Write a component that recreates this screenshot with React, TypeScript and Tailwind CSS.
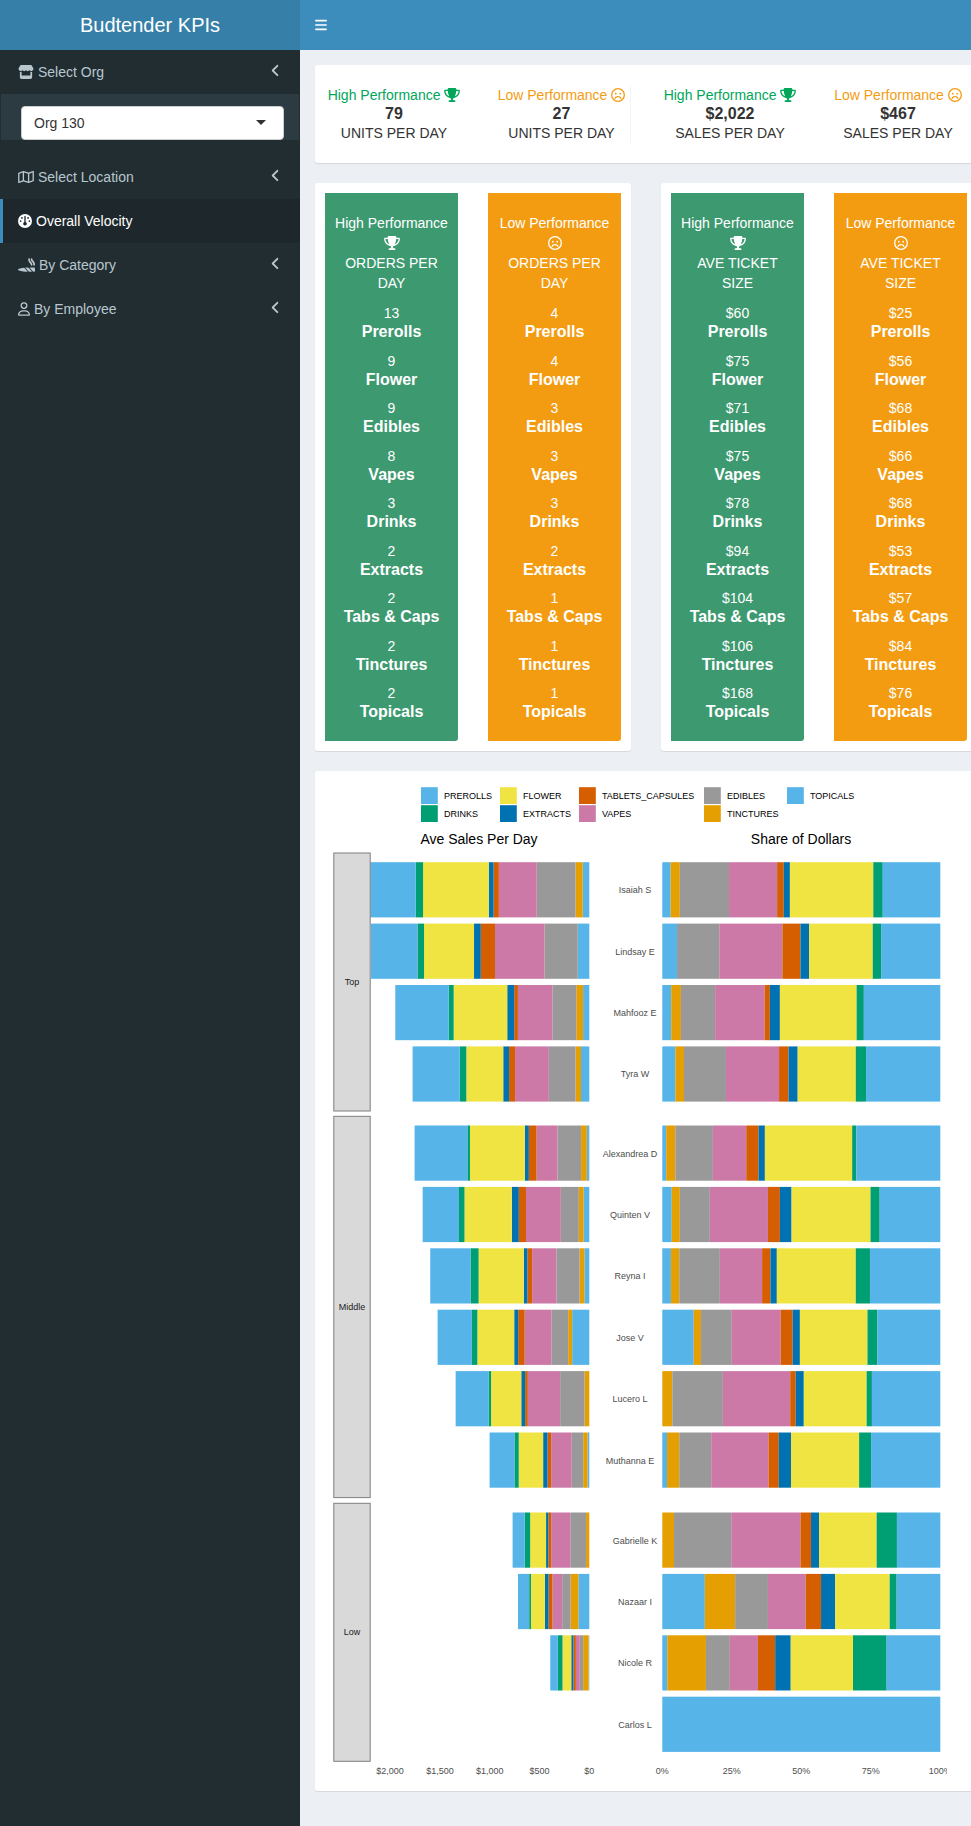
import type { ReactNode } from "react";
import {
  FaAngleLeft,
  FaBars,
  FaGauge,
  FaJoint,
  FaRegFaceFrown,
  FaRegMap,
  FaRegUser,
  FaStore,
  FaTrophy,
} from "react-icons/fa6";

type Level = "high" | "low";

const CATEGORIES = [
  "Prerolls",
  "Flower",
  "Edibles",
  "Vapes",
  "Drinks",
  "Extracts",
  "Tabs & Caps",
  "Tinctures",
  "Topicals",
];

const SUMMARY: { level: Level; value: string; label: string; divider?: boolean }[] = [
  { level: "high", value: "79", label: "UNITS PER DAY" },
  { level: "low", value: "27", label: "UNITS PER DAY", divider: true },
  { level: "high", value: "$2,022", label: "SALES PER DAY" },
  { level: "low", value: "$467", label: "SALES PER DAY" },
];

const ORDERS_HIGH = ["13", "9", "9", "8", "3", "2", "2", "2", "2"];
const ORDERS_LOW = ["4", "4", "3", "3", "3", "2", "1", "1", "1"];
const TICKET_HIGH = ["$60", "$75", "$71", "$75", "$78", "$94", "$104", "$106", "$168"];
const TICKET_LOW = ["$25", "$56", "$68", "$66", "$68", "$53", "$57", "$84", "$76"];

// Stack order of the share bars, left to right.
const STACK = [
  { key: "topicals", color: "#56b4e9" },
  { key: "tinctures", color: "#e69f00" },
  { key: "edibles", color: "#999999" },
  { key: "vapes", color: "#cc79a7" },
  { key: "tablets", color: "#d55e00" },
  { key: "extracts", color: "#0072b2" },
  { key: "flower", color: "#f0e442" },
  { key: "drinks", color: "#009e73" },
  { key: "prerolls", color: "#56b4e9" },
];

const LEGEND = [
  { x: 96, row: 0, label: "PREROLLS", color: "#56b4e9" },
  { x: 96, row: 1, label: "DRINKS", color: "#009e73" },
  { x: 175, row: 0, label: "FLOWER", color: "#f0e442" },
  { x: 175, row: 1, label: "EXTRACTS", color: "#0072b2" },
  { x: 254, row: 0, label: "TABLETS_CAPSULES", color: "#d55e00" },
  { x: 254, row: 1, label: "VAPES", color: "#cc79a7" },
  { x: 379, row: 0, label: "EDIBLES", color: "#999999" },
  { x: 379, row: 1, label: "TINCTURES", color: "#e69f00" },
  { x: 462, row: 0, label: "TOPICALS", color: "#56b4e9" },
];

// `cuts` holds the cumulative share (percent) at the end of each stack entry but the last.
type Person = { name: string; sales: number; cuts: number[] };
type Group = { name: string; top: number; height: number; nameX: number; people: Person[] };

const GROUPS: Group[] = [
  {
    name: "Top",
    top: 72,
    height: 258,
    nameX: 310,
    people: [
      { name: "Isaiah S", sales: 2199, cuts: [3.0, 6.3, 24.0, 41.3, 43.7, 45.9, 75.9, 79.3] },
      { name: "Lindsay E", sales: 2192, cuts: [5.3, 5.3, 20.5, 43.2, 49.7, 52.8, 75.7, 78.7] },
      { name: "Mahfooz E", sales: 1948, cuts: [3.2, 6.7, 19.0, 36.8, 38.7, 42.3, 69.9, 72.5] },
      { name: "Tyra W", sales: 1774, cuts: [4.7, 7.8, 22.9, 42.0, 45.4, 48.7, 69.6, 73.3] },
    ],
  },
  {
    name: "Middle",
    top: 335.3,
    height: 381.3,
    nameX: 305,
    people: [
      { name: "Alexandrea D", sales: 1754, cuts: [1.4, 4.7, 18.2, 30.2, 34.6, 36.9, 68.3, 69.8] },
      { name: "Quinten V", sales: 1673, cuts: [3.4, 6.3, 17.1, 38.0, 42.3, 46.5, 74.9, 78.2] },
      { name: "Reyna I", sales: 1597, cuts: [3.1, 6.1, 20.7, 35.9, 38.9, 41.2, 69.6, 74.7] },
      { name: "Jose V", sales: 1523, cuts: [11.3, 13.9, 25.0, 42.6, 46.9, 49.5, 73.8, 77.4] },
      { name: "Lucero L", sales: 1342, cuts: [0, 3.6, 21.8, 46.0, 48.0, 50.9, 73.5, 75.4] },
      { name: "Muthanna E", sales: 1001, cuts: [1.7, 6.1, 17.6, 38.2, 41.9, 46.3, 70.8, 75.1] },
    ],
  },
  {
    name: "Low",
    top: 722.3,
    height: 258,
    nameX: 310,
    people: [
      { name: "Gabrielle K", sales: 770, cuts: [0, 4.2, 24.8, 49.7, 53.5, 56.4, 77.1, 84.4] },
      { name: "Nazaar I", sales: 716, cuts: [15.3, 26.2, 38.0, 51.6, 57.1, 62.2, 81.8, 84.3] },
      { name: "Nicole R", sales: 392, cuts: [1.8, 15.7, 24.3, 34.4, 40.6, 46.2, 68.6, 80.7] },
      { name: "Carlos L", sales: 0, cuts: [0, 0, 0, 0, 0, 0, 0, 0] },
    ],
  },
];

const SALES_ZERO = 264.3;
const SALES_PX = 0.0996;
const SHARE_ZERO = 337.3;
const SHARE_PX = 2.78;
const BAR_PITCH = 61.4;
const BAR_HEIGHT = 55.2;

function LevelIcon({ level }: { level: Level }) {
  return level === "high" ? (
    <FaTrophy className="inline h-[14px] w-4 align-[-2px]" />
  ) : (
    <FaRegFaceFrown className="inline size-[14px] align-[-2px]" />
  );
}

function levelText(level: Level) {
  return level === "high" ? "High Performance" : "Low Performance";
}

function Card({ children, className }: { children: ReactNode; className?: string }) {
  return (
    <section className={`rounded-[3px] bg-white p-[10px] shadow-[0_1px_1px_rgba(0,0,0,0.1)] ${className ?? ""}`}>
      {children}
    </section>
  );
}

function VelocityBox({ level, lines, values }: { level: Level; lines: [string, string]; values: string[] }) {
  return (
    <div
      className={`rounded-br-[3px] py-5 text-center text-white ${level === "high" ? "bg-[#3d9970]" : "bg-[#f39c12]"}`}
    >
      <div className="whitespace-nowrap">{levelText(level)}</div>
      <div>
        <LevelIcon level={level} />
      </div>
      <div>{lines[0]}</div>
      <div>{lines[1]}</div>
      <ul className="mt-[10px] flex min-h-[418px] flex-col justify-between">
        {CATEGORIES.map((category, i) => (
          <li key={category}>
            <div>{values[i]}</div>
            <h5 className="text-base leading-[18px] font-bold">{category}</h5>
          </li>
        ))}
      </ul>
    </div>
  );
}

function StackBars({ person, y }: { person: Person; y: number }) {
  const edges = [0, ...person.cuts, 100];
  const salesWidth = person.sales * SALES_PX;
  return (
    <g>
      {STACK.map((part, i) => {
        const from = edges[i];
        const span = edges[i + 1] - from;
        if (span <= 0) return null;
        return (
          <g key={part.key} fill={part.color}>
            {salesWidth > 0 && (
              <rect
                x={SALES_ZERO - ((from + span) / 100) * salesWidth}
                y={y}
                width={(span / 100) * salesWidth}
                height={BAR_HEIGHT}
              />
            )}
            <rect x={SHARE_ZERO + from * SHARE_PX} y={y} width={span * SHARE_PX} height={BAR_HEIGHT} />
          </g>
        );
      })}
    </g>
  );
}

function SalesChart() {
  return (
    <svg
      width="622"
      height="1000"
      viewBox="0 0 622 1000"
      className="block overflow-hidden"
      role="img"
      aria-label="Ave Sales Per Day and Share of Dollars"
    >
      {LEGEND.map((item) => (
        <g key={item.label}>
          <rect x={item.x} y={6.2 + item.row * 18} width="16.8" height="16.8" fill={item.color} />
          <text x={item.x + 23} y={18 + item.row * 18} fontSize="9" fill="#000">
            {item.label}
          </text>
        </g>
      ))}
      <g fontSize="14" fill="#000" textAnchor="middle">
        <text x="154" y="63">Ave Sales Per Day</text>
        <text x="476" y="63">Share of Dollars</text>
      </g>
      {GROUPS.map((group) => (
        <g key={group.name}>
          {group.people.map((person, i) => {
            const y = group.top + 9.2 + i * BAR_PITCH;
            return (
              <g key={person.name}>
                <StackBars person={person} y={y} />
                <text x={group.nameX} y={y + 31} fontSize="9" fill="#4d4d4d" textAnchor="middle">
                  {person.name}
                </text>
              </g>
            );
          })}
          <rect
            x="8.8"
            y={group.top}
            width="36.4"
            height={group.height}
            fill="#d9d9d9"
            stroke="#7f7f7f"
            strokeWidth="1"
          />
          <text x="27" y={group.top + group.height / 2 + 3} fontSize="9" fill="#1a1a1a" textAnchor="middle">
            {group.name}
          </text>
        </g>
      ))}
      <g fontSize="9" fill="#4d4d4d" textAnchor="middle">
        {["$0", "$500", "$1,000", "$1,500", "$2,000"].map((tick, i) => (
          <text key={tick} x={SALES_ZERO - i * 500 * SALES_PX} y="993">
            {tick}
          </text>
        ))}
        {["0%", "25%", "50%", "75%", "100%"].map((tick, i) => (
          <text key={tick} x={SHARE_ZERO + i * 25 * SHARE_PX} y="993">
            {tick}
          </text>
        ))}
      </g>
    </svg>
  );
}

function NavItem({
  icon,
  label,
  active,
  expandable,
}: {
  icon: ReactNode;
  label: string;
  active?: boolean;
  expandable?: boolean;
}) {
  return (
    <a
      href="#"
      className={`flex h-11 items-center gap-1 border-l-[3px] pr-[17px] pl-[15px] ${
        active ? "border-[#3c8dbc] bg-[#1e282c] text-white" : "border-transparent text-[#b8c7ce]"
      }`}
    >
      {icon}
      <span>{label}</span>
      {expandable && <FaAngleLeft className="mb-[3px] ml-auto size-[15px]" />}
    </a>
  );
}

export default function App() {
  return (
    <div className="flex min-h-screen flex-col overflow-x-hidden bg-[#222d32] font-['Liberation_Sans',Arial,sans-serif] text-sm leading-5 text-[#333]">
      <header className="flex h-[50px] text-white">
        <a href="#" className="flex w-[300px] shrink-0 items-center justify-center bg-[#367fa9] text-xl">
          Budtender KPIs
        </a>
        <div className="flex grow items-center bg-[#3c8dbc]">
          <button type="button" aria-label="Toggle navigation" className="h-full px-[15px]">
            <FaBars className="h-[14px] w-3" />
          </button>
        </div>
      </header>

      <div className="flex grow">
        <nav className="w-[300px] shrink-0">
          <NavItem icon={<FaStore className="h-[14px] w-4" />} label="Select Org" expandable />
          <div className="mx-px mb-[15px] bg-[#2c3b41] pt-3 pr-[15px] pl-5">
            <div className="relative">
              <select
                aria-label="Select Org"
                defaultValue="Org 130"
                className="block h-[34px] w-full appearance-none rounded border border-[#cccccc] bg-white px-3 text-sm text-[#333]"
              >
                <option>Org 130</option>
              </select>
              <span className="pointer-events-none absolute top-[14px] right-[18px] border-x-[5px] border-t-[5px] border-x-transparent border-t-[#333]" />
            </div>
          </div>
          <NavItem icon={<FaRegMap className="h-[14px] w-4" />} label="Select Location" expandable />
          <NavItem icon={<FaGauge className="size-[14px]" />} label="Overall Velocity" active />
          <NavItem icon={<FaJoint className="h-[14px] w-[17px]" />} label="By Category" expandable />
          <NavItem icon={<FaRegUser className="h-[14px] w-3" />} label="By Employee" expandable />
        </nav>

        <main className="min-w-[692px] grow bg-[#ecf0f5] p-[15px]">
          <Card>
            <div className="-mx-[15px] grid grid-cols-4">
              {SUMMARY.map((item, i) => (
                <div
                  key={i}
                  className={`mx-[15px] my-[10px] text-center ${item.divider ? "border-r border-[#f4f4f4]" : ""}`}
                >
                  <div className={`whitespace-nowrap ${item.level === "high" ? "text-[#00a65a]" : "text-[#f39c12]"}`}>
                    {levelText(item.level)} <LevelIcon level={item.level} />
                  </div>
                  <h5 className="text-base leading-[18px] font-bold">{item.value}</h5>
                  <div>{item.label}</div>
                </div>
              ))}
            </div>
          </Card>

          <div className="mt-5 grid grid-cols-2 gap-[30px]">
            <Card className="grid grid-cols-2 gap-[30px]">
              <VelocityBox level="high" lines={["ORDERS PER", "DAY"]} values={ORDERS_HIGH} />
              <VelocityBox level="low" lines={["ORDERS PER", "DAY"]} values={ORDERS_LOW} />
            </Card>
            <Card className="grid grid-cols-2 gap-[30px]">
              <VelocityBox level="high" lines={["AVE TICKET", "SIZE"]} values={TICKET_HIGH} />
              <VelocityBox level="low" lines={["AVE TICKET", "SIZE"]} values={TICKET_LOW} />
            </Card>
          </div>

          <Card className="mt-5">
            <SalesChart />
          </Card>
        </main>
      </div>
    </div>
  );
}
